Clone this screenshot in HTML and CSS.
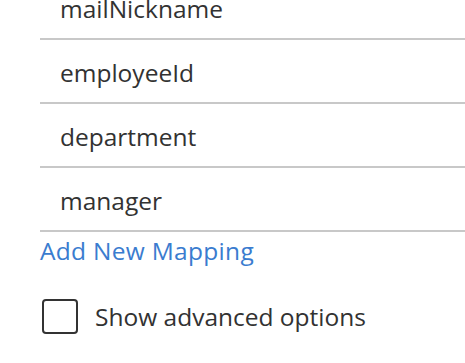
FILE: index.html
```html
<!DOCTYPE html>
<html>
<head>
<meta charset="utf-8">
<link rel="stylesheet" href="styles.css">
</head>
<body>
<div class="panel">
  <ul class="mappings">
    <li class="row">mailNickname</li>
    <li class="row">employeeId</li>
    <li class="row">department</li>
    <li class="row">manager</li>
  </ul>
  <a class="add-link" href="#">Add New Mapping</a>
  <label class="advanced">
    <span class="box"></span>
    <span class="advanced-text">Show advanced options</span>
  </label>
</div>
</body>
</html>
```

FILE: styles.css
```css
html, body {
  margin: 0;
  padding: 0;
  background: #ffffff;
  overflow: hidden;
}
body {
  font-family: "Open Sans", "Noto Sans", sans-serif;
  font-size: 24.5px;
  color: #323232;
}
.panel {
  margin-top: -24px;
  padding-left: 40px;
}
.mappings {
  list-style: none;
  margin: 0;
  padding: 0;
}
.row {
  height: 60px;
  padding-top: 2px;
  border-bottom: 2px solid #c8c8c8;
  padding-left: 20px;
  display: flex;
  align-items: center;
  box-sizing: content-box;
}
.add-link {
  display: block;
  color: #3a7ccf;
  text-decoration: none;
  margin-top: 4px;
  line-height: 30px;
  letter-spacing: 0.3px;
}
.advanced {
  display: flex;
  align-items: center;
  gap: 17px;
  margin-top: 33px;
  padding-left: 2px;
}
.box {
  width: 32px;
  height: 31px;
  border: 2px solid #333333;
  border-radius: 4px;
  flex: none;
}
```
